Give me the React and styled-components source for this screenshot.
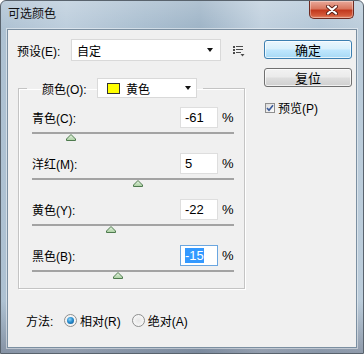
import React from "react";
import styled, { createGlobalStyle } from "styled-components";

const GlobalStyle = createGlobalStyle`
  html, body {
    margin: 0;
    padding: 0;
    background: #ffffff;
  }
  body {
    font-family: "Liberation Sans", "Noto Sans CJK SC", sans-serif;
    font-size: 12px;
    color: #000;
  }
`;

const Window = styled.div`
  width: 364px;
  height: 354px;
  box-sizing: border-box;
  display: flex;
  flex-direction: column;
  padding: 0 6px 5px 6px;
  border: 1px solid #59636d;
  border-radius: 6px 6px 0 0;
  background:
    linear-gradient(180deg, rgba(255, 255, 255, 0.2) 0%, rgba(255, 255, 255, 0) 30px, rgba(0, 0, 0, 0) 300px, rgba(60, 60, 80, 0.35) 100%),
    linear-gradient(90deg, #adc1d2 0%, #bccddc 18%, #a8bdcf 40%, #9db3c6 55%, #c0d0de 72%, #b2c6d7 88%, #bccddb 100%);
`;

const TitleBar = styled.div`
  height: 28px;
  display: flex;
  align-items: flex-start;
  justify-content: space-between;
`;

const Title = styled.div`
  padding: 6px 0 0 1px;
  font-size: 12px;
  color: #111;
  line-height: 14px;
`;

const CloseButton = styled.div`
  width: 45px;
  height: 18px;
  margin-right: 3px;
  box-sizing: border-box;
  display: flex;
  align-items: center;
  justify-content: center;
  border: 1px solid #6e2a20;
  border-top: none;
  border-radius: 0 0 5px 5px;
  background: linear-gradient(180deg, #e9a99a 0%, #d8775f 45%, #c2391e 55%, #d45a3a 85%, #e28a6c 100%);
  box-shadow: inset 0 0 0 1px rgba(255, 255, 255, 0.35);
`;

const Client = styled.div`
  flex: 1;
  display: flex;
  padding: 9px 0 0 9px;
  border: 1px solid #7b8fa1;
  background: #f0f0f0;
  box-shadow: 0 0 0 1px rgba(255, 255, 255, 0.45);
`;

const LeftCol = styled.div`
  width: 236px;
  display: flex;
  flex-direction: column;
`;

const RightCol = styled.div`
  width: 88px;
  margin-left: 11px;
  padding-top: 1px;
  display: flex;
  flex-direction: column;
`;

const PresetRow = styled.div`
  height: 22px;
  display: flex;
  align-items: center;
`;

const Label = styled.div`
  width: ${(p) => p.$w || 54}px;
  flex: none;
  white-space: nowrap;
`;

const Select = styled.div`
  width: ${(p) => p.$w}px;
  height: ${(p) => p.$h}px;
  box-sizing: border-box;
  display: flex;
  align-items: center;
  padding: 0 ${(p) => p.$pr || 7}px 0 ${(p) => p.$pl || 5}px;
  background: #fff;
  border: 1px solid #d9d9d9;
  gap: 6px;
`;

const SelectText = styled.span`
  flex: 1;
`;

const Caret = styled.span`
  width: 0;
  height: 0;
  border-left: 3.5px solid transparent;
  border-right: 3.5px solid transparent;
  border-top: 4px solid #111;
`;

const MenuIcon = styled.svg`
  margin-left: 12px;
  margin-top: 2px;
`;

const Group = styled.fieldset`
  margin: 17px 0 0 1px;
  width: 227px;
  box-sizing: border-box;
  padding: 9px 10px 10px 13px;
  border: 1px solid #c4c4c4;
  box-shadow: inset 1px 1px 0 #fff, 1px 1px 0 #fff;
  min-inline-size: 0;
`;

const Legend = styled.legend`
  margin-left: -5px;
  padding: 0 6px 0 15px;
  display: flex;
  align-items: center;
  height: 20px;
`;

const Swatch = styled.span`
  width: 13px;
  height: 11px;
  box-sizing: border-box;
  background: #ffff00;
  border: 1px solid #333;
`;

const SliderRow = styled.div`
  display: flex;
  flex-direction: column;
  & + & {
    margin-top: 13px;
  }
`;

const RowHead = styled.div`
  height: 21px;
  display: flex;
  align-items: center;
`;

const RowLabel = styled.div`
  flex: 1;
  white-space: nowrap;
`;

const Field = styled.div`
  width: 38px;
  height: 21px;
  box-sizing: border-box;
  display: flex;
  align-items: center;
  padding-left: 4px;
  background: #fff;
  border: 1px solid ${(p) => (p.$focus ? "#6aa6e0" : "#dedede")};
  font-size: 13px;
`;

const Selected = styled.span`
  background: #3399ff;
  color: #fff;
  line-height: 15px;
`;

const Percent = styled.div`
  width: 12px;
  margin-left: 4px;
  font-size: 13px;
`;

const Track = styled.div`
  position: relative;
  height: 2px;
  margin: 4px 0 6px 0;
  background: #a3a3a3;
`;

const Thumb = styled.svg`
  position: absolute;
  top: 2px;
  margin-left: -5px;
`;

const MethodRow = styled.div`
  margin-top: 23px;
  padding-left: 9px;
  height: 16px;
  display: flex;
  align-items: center;
`;

const Radio = styled.span`
  width: 13px;
  height: 13px;
  box-sizing: border-box;
  border-radius: 50%;
  border: 1px solid #8e8f8f;
  background: radial-gradient(circle at 50% 50%, #e6e6e6 0%, #f4f4f4 60%, #fdfdfd 100%);
  display: flex;
  align-items: center;
  justify-content: center;
  margin: 0 3px 0 ${(p) => p.$ml}px;
  &::after {
    content: "";
    width: 7px;
    height: 7px;
    border-radius: 50%;
    display: ${(p) => (p.$on ? "block" : "none")};
    background: radial-gradient(circle at 40% 35%, #8fd4f8 0%, #2a8fd0 45%, #0c4f8a 100%);
  }
`;

const Button = styled.div`
  height: 19px;
  box-sizing: border-box;
  display: flex;
  align-items: center;
  justify-content: center;
  border-radius: 3px;
  border: 1px solid ${(p) => (p.$default ? "#3c7fb1" : "#707070")};
  background: ${(p) =>
    p.$default
      ? "linear-gradient(180deg, #eaf6fd 0%, #d9f0fc 45%, #bee6fd 55%, #a7d9f5 100%)"
      : "linear-gradient(180deg, #f2f2f2 0%, #ebebeb 45%, #dddddd 55%, #cfcfcf 100%)"};
  box-shadow: inset 0 0 0 1px rgba(255, 255, 255, 0.7);
  font-size: 13px;
  & + & {
    margin-top: 9px;
  }
`;

const CheckRow = styled.div`
  margin-top: 12px;
  margin-left: 1px;
  display: flex;
  align-items: center;
  gap: 3px;
`;

const CheckBox = styled.span`
  width: 10px;
  height: 10px;
  box-sizing: border-box;
  border: 1px solid #8f8f8f;
  background: linear-gradient(135deg, #dcdcdc 0%, #fbfbfb 100%);
  display: flex;
  align-items: center;
  justify-content: center;
`;

const sliders = [
  { label: "青色(C):", value: -61 },
  { label: "洋红(M):", value: 5 },
  { label: "黄色(Y):", value: -22 },
  { label: "黑色(B):", value: -15, focus: true },
];

function SliderThumb({ value }) {
  const pct = ((value + 100) / 200) * 100;
  return (
    <Thumb width="10" height="7" viewBox="0 0 10 7" style={{ left: `${pct}%` }}>
      <defs>
        <linearGradient id="tg" x1="0" y1="0" x2="0" y2="1">
          <stop offset="0" stopColor="#e8f5e4" />
          <stop offset="1" stopColor="#a9cfa0" />
        </linearGradient>
      </defs>
      <polygon points="5,0.5 9.5,5 9.5,6.5 0.5,6.5 0.5,5" fill="url(#tg)" stroke="#4e7a4e" strokeWidth="1" />
    </Thumb>
  );
}

export default function App() {
  return (
    <>
      <GlobalStyle />
      <Window>
        <TitleBar>
          <Title>可选颜色</Title>
          <CloseButton>
            <svg width="12" height="10" viewBox="0 0 12 10">
              <path d="M2 1.5 L10 8.5 M10 1.5 L2 8.5" stroke="#5a1f16" strokeWidth="4" strokeLinecap="round" />
              <path d="M2 1.5 L10 8.5 M10 1.5 L2 8.5" stroke="#ffffff" strokeWidth="2.2" strokeLinecap="round" />
            </svg>
          </CloseButton>
        </TitleBar>
        <Client>
          <LeftCol>
            <PresetRow>
              <Label $w={54}>预设(E):</Label>
              <Select $w={150} $h={22} $pl={5} $pr={7}>
                <SelectText>自定</SelectText>
                <Caret />
              </Select>
              <MenuIcon width="12" height="11" viewBox="0 0 12 11">
                <g fill="#4a4a4a">
                  <rect x="0" y="0" width="2" height="2" />
                  <rect x="3" y="0" width="7" height="1" />
                  <rect x="0" y="3" width="2" height="2" />
                  <rect x="3" y="3" width="7" height="1" />
                  <rect x="0" y="6" width="2" height="2" />
                  <rect x="3" y="6" width="5" height="1" />
                  <polygon points="7.5,8 11.5,8 9.5,10.5" />
                </g>
              </MenuIcon>
            </PresetRow>

            <Group>
              <Legend>
                <Label $w={55}>颜色(O):</Label>
                <Select $w={100} $h={20} $pl={9} $pr={5}>
                  <Swatch />
                  <SelectText>黄色</SelectText>
                  <Caret />
                </Select>
              </Legend>
              {sliders.map((s) => (
                <SliderRow key={s.label}>
                  <RowHead>
                    <RowLabel>{s.label}</RowLabel>
                    <Field $focus={s.focus}>
                      {s.focus ? <Selected>{s.value}</Selected> : s.value}
                    </Field>
                    <Percent>%</Percent>
                  </RowHead>
                  <Track>
                    <SliderThumb value={s.value} />
                  </Track>
                </SliderRow>
              ))}
            </Group>

            <MethodRow>
              <Label $w={38}>方法:</Label>
              <Radio $on $ml={0} />
              <span>相对(R)</span>
              <Radio $ml={11} />
              <span>绝对(A)</span>
            </MethodRow>
          </LeftCol>

          <RightCol>
            <Button $default>确定</Button>
            <Button>复位</Button>
            <CheckRow>
              <CheckBox>
                <svg width="8" height="8" viewBox="0 0 8 8">
                  <path d="M1 4 L3 6.3 L7 1.2" fill="none" stroke="#3a5a9a" strokeWidth="1.6" />
                </svg>
              </CheckBox>
              <span>预览(P)</span>
            </CheckRow>
          </RightCol>
        </Client>
      </Window>
    </>
  );
}
